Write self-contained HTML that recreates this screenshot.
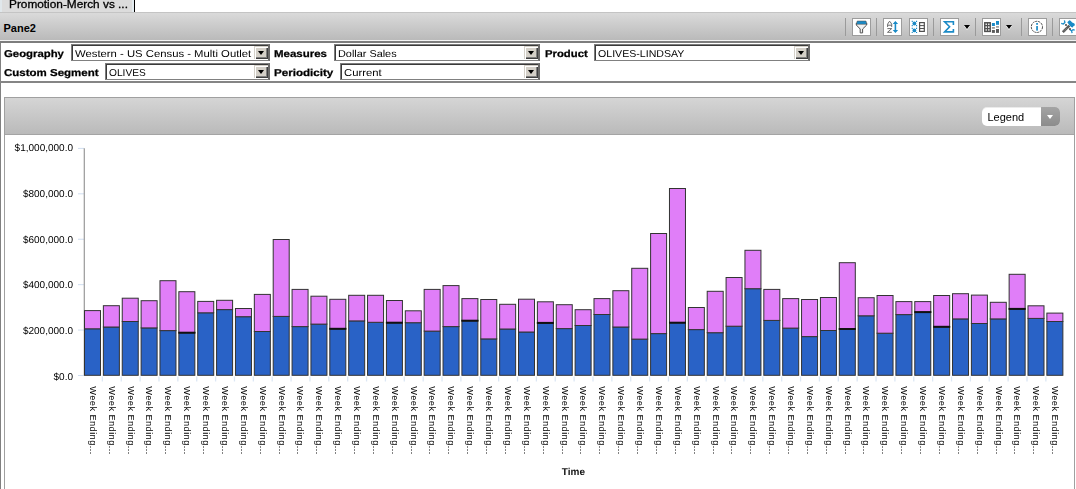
<!DOCTYPE html>
<html><head><meta charset="utf-8"><style>
html,body{margin:0;padding:0;background:#fff;}
body{width:1076px;height:489px;overflow:hidden;position:relative;font-family:"Liberation Sans",sans-serif;}
.a{position:absolute;}
.t{transform-origin:0 0;white-space:pre;line-height:1;}
.tab{left:0;top:0;width:134px;height:12px;background:#dcdcdc;overflow:hidden;}
.tabl{left:0;top:0;width:2px;height:12px;background:#e0e7eb;}
.tabr{left:132px;top:0;width:2px;height:12px;background:#e4ecf0;}
.tabb{left:134px;top:0;width:1px;height:12px;background:#000;}
.tabt{font-size:11px;color:#000;-webkit-text-stroke:0.3px #000;}
.hdrl{left:0;top:12px;width:1076px;height:1px;background:#c4c4c4;}
.hdr{left:0;top:13px;width:1076px;height:27px;background:linear-gradient(#dadada,#bababa);}
.hdrw{left:0;top:40px;width:1076px;height:1px;background:#f4f4f4;}
.hdrd{left:0;top:41px;width:1076px;height:2px;background:#7d7d7d;}
.pane{font-size:11px;font-weight:bold;color:#000;}
.lb{left:0;top:43px;width:1px;height:446px;background:#808080;}
.fb{left:0;top:81px;width:1076px;height:2px;background:#858585;}
.lab{text-rendering:geometricPrecision;-webkit-text-stroke:0.25px #000;font-size:10px;font-weight:bold;color:#000;}
.sel{box-sizing:border-box;height:17px;border-style:solid;border-width:1px 2px 1px 1px;border-color:#7c7c7c #6a6a6a #808080 #7c7c7c;background:#fff;box-shadow:inset 1px 1px #3a3a3a;}
.selt{text-rendering:geometricPrecision;font-size:10px;color:#000;}
.btn{position:absolute;right:0;top:1px;width:14px;height:13px;background:#d4d0c8;box-shadow:inset 1px 1px #d4d0c8,inset 2px 2px #fff,inset -1px -1px #404040,inset -2px -2px #808080;}
.btn:after{content:"";position:absolute;left:4px;top:5px;border-left:3.5px solid transparent;border-right:3.5px solid transparent;border-top:4px solid #000;}
.panel{left:4px;top:97px;width:1071px;height:400px;box-sizing:border-box;border:1px solid #a0a0a0;background:#fff;}
.phdr{left:5px;top:98px;width:1069px;height:36px;background:linear-gradient(#d5d5d5,#bababa);border-bottom:1px solid #a4a4a4;}
.legend{left:982px;top:107px;width:78px;height:19px;border-radius:5px;background:#fff;overflow:hidden;will-change:transform;box-shadow:inset 0 1px rgba(0,0,0,.08);}
.legt{left:5.5px;top:4px;font-size:11px;color:#000;}
.legb{left:58.5px;top:0;width:20px;height:19px;background:linear-gradient(#a4a4a4,#8c8c8c);}
.legb:after{content:"";position:absolute;left:6.3px;top:8px;border-left:3.3px solid transparent;border-right:3.3px solid transparent;border-top:4px solid #fff;}
.chart{position:absolute;left:0;top:0;will-change:transform;}
.sep{position:absolute;top:18px;width:1px;height:18px;background:#9a9a9a;}
.ib{position:absolute;top:18px;width:19px;height:18px;box-sizing:border-box;background:#fff;border:1px solid #9c9c9c;}
.ib svg{position:absolute;left:-1px;top:-1px;}
.dd{position:absolute;top:25px;width:0;height:0;border-left:3.6px solid transparent;border-right:3.6px solid transparent;border-top:4.5px solid #000;filter:drop-shadow(0 1px 0 #fff);}
</style></head><body>
<div class="a tab"></div><div class="a tabl"></div><div class="a tabr"></div><div class="a tabb"></div>
<div class="a t tabt" style="left:8.5px;top:-1px;transform:scaleX(1.075);">Promotion-Merch vs ...</div>
<div class="a hdrl"></div><div class="a hdr"></div><div class="a hdrw"></div><div class="a hdrd"></div>
<div class="a t pane" style="left:3.5px;top:23px;transform:scaleX(1);">Pane2</div>

<div class="sep" style="left:845px"></div>
<div class="ib" style="left:852px"><svg width="19" height="18" viewBox="0 0 19 18"><path d="M4.3 4.8V7l3.9 4v3.9h2.4V11l4.1-4V4.8" fill="#f2f2f2" stroke="#505050" stroke-width="1"/><path d="M5.2 3h8.8l0.8 3.3H4.4z" fill="#1a8ac6" stroke="#5a4a40" stroke-width=".5"/></svg></div>
<div class="sep" style="left:876px"></div>
<div class="ib" style="left:883px"><svg width="19" height="18" viewBox="0 0 19 18"><path d="M4.6 9V6.2L6.2 3.6h0.9L8.7 6.2V9M4.6 7.2h4.1" fill="none" stroke="#5c5c5c" stroke-width=".9"/><path d="M4.4 10.6h4.3L4.5 14.3h4.3" fill="none" stroke="#5c5c5c" stroke-width=".9"/><path d="M12.4 4.5v9" stroke="#1a8ac6" stroke-width="1.6"/><path d="M9.7 6l2.7-3 2.7 3zM9.7 12l2.7 3 2.7-3z" fill="#1a8ac6"/></svg></div>
<div class="ib" style="left:909px"><svg width="19" height="18" viewBox="0 0 19 18"><g fill="#1a8ac6"><circle cx="5.4" cy="5.5" r="1.9"/><circle cx="5.4" cy="12.4" r="1.9"/><path d="M2.7 2.8h1.1v1.1H2.7zM7 2.8h1.1v1.1H7zM2.7 7.1h1.1v1.1H2.7zM7 7.1h1.1v1.1H7zM2.7 9.8h1.1v1.1H2.7zM7 9.8h1.1v1.1H7zM2.7 14h1.1v1.1H2.7zM7 14h1.1v1.1H7z"/></g><rect x="10.6" y="4.6" width="4.7" height="8.8" fill="#fff" stroke="#505050" stroke-width="1.2"/><path d="M10.6 7.6h4.7M10.6 10.5h4.7" stroke="#505050" stroke-width="1"/></svg></div>
<div class="sep" style="left:933px"></div>
<div class="ib" style="left:940px"><svg width="19" height="18" viewBox="0 0 19 18"><path d="M13.4 7V3.7H4.6l5 5.1-5 5.1h8.8V11" fill="none" stroke="#1a8ac6" stroke-width="1.6"/></svg></div>
<div class="dd" style="left:964px"></div>
<div class="sep" style="left:975px"></div>
<div class="ib" style="left:982px"><svg width="19" height="18" viewBox="0 0 19 18"><rect x="2.8" y="4.8" width="5.4" height="8.6" fill="#fff" stroke="#505050" stroke-width="1.5"/><path d="M5.5 4.8v8.6M2.8 7.7h5.4M2.8 10.6h5.4" stroke="#505050" stroke-width="1.3"/><rect x="9.9" y="5" width="3" height="3" fill="#1a8ac6"/><rect x="14" y="3" width="3" height="3.8" fill="#1a8ac6"/><rect x="9.9" y="9" width="3" height="1.8" fill="#9a9a9a"/><rect x="14" y="8.1" width="3" height="1.6" fill="#9a9a9a"/><rect x="9.9" y="12" width="3" height="2.9" fill="#5a5a5a"/><rect x="14" y="11" width="3" height="3.9" fill="#5a5a5a"/></svg></div>
<div class="dd" style="left:1006px"></div>
<div class="sep" style="left:1021px"></div>
<div class="ib" style="left:1028px"><svg width="19" height="18" viewBox="0 0 19 18"><circle cx="8.9" cy="8.9" r="5.6" fill="none" stroke="#505050" stroke-width="1" stroke-dasharray="2.2 0.8"/><rect x="8.2" y="5" width="1.7" height="1.8" fill="#1a8ac6"/><rect x="8.2" y="8" width="1.7" height="4.6" fill="#1a8ac6"/></svg></div>
<div class="sep" style="left:1052px"></div>
<div class="ib" style="left:1059px;width:20px"><svg width="20" height="18" viewBox="0 0 20 18"><path d="M3.8 14.2L10.4 7.6" stroke="#5a5a5a" stroke-width="2.6"/><path d="M4.6 12.2l1.2 1.2M5.8 11l1.2 1.2M7 9.8l1.2 1.2" stroke="#999" stroke-width=".6"/><circle cx="7" cy="7" r="1.1" fill="#555"/><circle cx="11" cy="11.2" r="1.1" fill="#555"/><polygon points="8.3,4.3 10.3,2.2 11.6,2.8 13.2,4.6 15.4,5.6 16,7.3 14.6,8 13.6,9.6 12.2,9 10.4,7.3" fill="#1a8ac6"/><path d="M2.2 5.4L4.3 6 5.9 4.5 5.4 2.3M11.2 12l1.4 0.8 0.5 2.4M12.6 12.8l1.5-1.2 1.6 0.5" fill="none" stroke="#1a8ac6" stroke-width="1.3"/></svg></div>

<div class="a lb"></div>
<div class="a fb"></div>
<div class="a t lab" style="left:4px;top:50px;transform:scaleX(1.134);">Geography</div>
<div class="a sel" style="left:71px;top:44px;width:199px;"><div class="a t selt" style="left:3px;top:5px;transform:scaleX(1.13);">Western - US Census - Multi Outlet</div><span class="btn"></span></div>
<div class="a t lab" style="left:274px;top:50px;transform:scaleX(1.148);">Measures</div>
<div class="a sel" style="left:334px;top:44px;width:206px;"><div class="a t selt" style="left:3px;top:5px;transform:scaleX(1.087);">Dollar Sales</div><span class="btn"></span></div>
<div class="a t lab" style="left:545px;top:50px;transform:scaleX(1.13);">Product</div>
<div class="a sel" style="left:594px;top:44px;width:216px;"><div class="a t selt" style="left:3px;top:5px;transform:scaleX(1.06);">OLIVES-LINDSAY</div><span class="btn"></span></div>
<div class="a t lab" style="left:4px;top:69px;transform:scaleX(1.15);">Custom Segment</div>
<div class="a sel" style="left:105px;top:63px;width:165px;"><div class="a t selt" style="left:3px;top:5px;transform:scaleX(1.02);">OLIVES</div><span class="btn"></span></div>
<div class="a t lab" style="left:274px;top:69px;transform:scaleX(1.16);">Periodicity</div>
<div class="a sel" style="left:340px;top:63px;width:200px;"><div class="a t selt" style="left:3px;top:5px;transform:scaleX(1.126);">Current</div><span class="btn"></span></div>
<div class="a panel"></div>
<div class="a phdr"></div>
<div class="a legend"><div class="a legt">Legend</div><div class="a legb"></div></div>
<svg class="chart" width="1076" height="489" viewBox="0 0 1076 489">
<g><line x1="78" y1="375.50" x2="84" y2="375.50" stroke="#d0def0" stroke-width="1"/><line x1="78" y1="330.08" x2="84" y2="330.08" stroke="#d0def0" stroke-width="1"/><line x1="78" y1="284.66" x2="84" y2="284.66" stroke="#d0def0" stroke-width="1"/><line x1="78" y1="239.24" x2="84" y2="239.24" stroke="#d0def0" stroke-width="1"/><line x1="78" y1="193.82" x2="84" y2="193.82" stroke="#d0def0" stroke-width="1"/><line x1="78" y1="148.40" x2="84" y2="148.40" stroke="#d0def0" stroke-width="1"/><line x1="102.37" y1="376.5" x2="102.37" y2="381.5" stroke="#dce7f4" stroke-width="1.3"/><line x1="121.24" y1="376.5" x2="121.24" y2="381.5" stroke="#dce7f4" stroke-width="1.3"/><line x1="140.11" y1="376.5" x2="140.11" y2="381.5" stroke="#dce7f4" stroke-width="1.3"/><line x1="158.98" y1="376.5" x2="158.98" y2="381.5" stroke="#dce7f4" stroke-width="1.3"/><line x1="177.85" y1="376.5" x2="177.85" y2="381.5" stroke="#dce7f4" stroke-width="1.3"/><line x1="196.72" y1="376.5" x2="196.72" y2="381.5" stroke="#dce7f4" stroke-width="1.3"/><line x1="215.59" y1="376.5" x2="215.59" y2="381.5" stroke="#dce7f4" stroke-width="1.3"/><line x1="234.46" y1="376.5" x2="234.46" y2="381.5" stroke="#dce7f4" stroke-width="1.3"/><line x1="253.33" y1="376.5" x2="253.33" y2="381.5" stroke="#dce7f4" stroke-width="1.3"/><line x1="272.20" y1="376.5" x2="272.20" y2="381.5" stroke="#dce7f4" stroke-width="1.3"/><line x1="291.07" y1="376.5" x2="291.07" y2="381.5" stroke="#dce7f4" stroke-width="1.3"/><line x1="309.94" y1="376.5" x2="309.94" y2="381.5" stroke="#dce7f4" stroke-width="1.3"/><line x1="328.81" y1="376.5" x2="328.81" y2="381.5" stroke="#dce7f4" stroke-width="1.3"/><line x1="347.68" y1="376.5" x2="347.68" y2="381.5" stroke="#dce7f4" stroke-width="1.3"/><line x1="366.55" y1="376.5" x2="366.55" y2="381.5" stroke="#dce7f4" stroke-width="1.3"/><line x1="385.42" y1="376.5" x2="385.42" y2="381.5" stroke="#dce7f4" stroke-width="1.3"/><line x1="404.29" y1="376.5" x2="404.29" y2="381.5" stroke="#dce7f4" stroke-width="1.3"/><line x1="423.16" y1="376.5" x2="423.16" y2="381.5" stroke="#dce7f4" stroke-width="1.3"/><line x1="442.03" y1="376.5" x2="442.03" y2="381.5" stroke="#dce7f4" stroke-width="1.3"/><line x1="460.90" y1="376.5" x2="460.90" y2="381.5" stroke="#dce7f4" stroke-width="1.3"/><line x1="479.77" y1="376.5" x2="479.77" y2="381.5" stroke="#dce7f4" stroke-width="1.3"/><line x1="498.64" y1="376.5" x2="498.64" y2="381.5" stroke="#dce7f4" stroke-width="1.3"/><line x1="517.51" y1="376.5" x2="517.51" y2="381.5" stroke="#dce7f4" stroke-width="1.3"/><line x1="536.38" y1="376.5" x2="536.38" y2="381.5" stroke="#dce7f4" stroke-width="1.3"/><line x1="555.25" y1="376.5" x2="555.25" y2="381.5" stroke="#dce7f4" stroke-width="1.3"/><line x1="574.12" y1="376.5" x2="574.12" y2="381.5" stroke="#dce7f4" stroke-width="1.3"/><line x1="592.99" y1="376.5" x2="592.99" y2="381.5" stroke="#dce7f4" stroke-width="1.3"/><line x1="611.86" y1="376.5" x2="611.86" y2="381.5" stroke="#dce7f4" stroke-width="1.3"/><line x1="630.73" y1="376.5" x2="630.73" y2="381.5" stroke="#dce7f4" stroke-width="1.3"/><line x1="649.60" y1="376.5" x2="649.60" y2="381.5" stroke="#dce7f4" stroke-width="1.3"/><line x1="668.47" y1="376.5" x2="668.47" y2="381.5" stroke="#dce7f4" stroke-width="1.3"/><line x1="687.34" y1="376.5" x2="687.34" y2="381.5" stroke="#dce7f4" stroke-width="1.3"/><line x1="706.21" y1="376.5" x2="706.21" y2="381.5" stroke="#dce7f4" stroke-width="1.3"/><line x1="725.08" y1="376.5" x2="725.08" y2="381.5" stroke="#dce7f4" stroke-width="1.3"/><line x1="743.95" y1="376.5" x2="743.95" y2="381.5" stroke="#dce7f4" stroke-width="1.3"/><line x1="762.82" y1="376.5" x2="762.82" y2="381.5" stroke="#dce7f4" stroke-width="1.3"/><line x1="781.69" y1="376.5" x2="781.69" y2="381.5" stroke="#dce7f4" stroke-width="1.3"/><line x1="800.56" y1="376.5" x2="800.56" y2="381.5" stroke="#dce7f4" stroke-width="1.3"/><line x1="819.43" y1="376.5" x2="819.43" y2="381.5" stroke="#dce7f4" stroke-width="1.3"/><line x1="838.30" y1="376.5" x2="838.30" y2="381.5" stroke="#dce7f4" stroke-width="1.3"/><line x1="857.17" y1="376.5" x2="857.17" y2="381.5" stroke="#dce7f4" stroke-width="1.3"/><line x1="876.04" y1="376.5" x2="876.04" y2="381.5" stroke="#dce7f4" stroke-width="1.3"/><line x1="894.91" y1="376.5" x2="894.91" y2="381.5" stroke="#dce7f4" stroke-width="1.3"/><line x1="913.78" y1="376.5" x2="913.78" y2="381.5" stroke="#dce7f4" stroke-width="1.3"/><line x1="932.65" y1="376.5" x2="932.65" y2="381.5" stroke="#dce7f4" stroke-width="1.3"/><line x1="951.52" y1="376.5" x2="951.52" y2="381.5" stroke="#dce7f4" stroke-width="1.3"/><line x1="970.39" y1="376.5" x2="970.39" y2="381.5" stroke="#dce7f4" stroke-width="1.3"/><line x1="989.26" y1="376.5" x2="989.26" y2="381.5" stroke="#dce7f4" stroke-width="1.3"/><line x1="1008.13" y1="376.5" x2="1008.13" y2="381.5" stroke="#dce7f4" stroke-width="1.3"/><line x1="1027.00" y1="376.5" x2="1027.00" y2="381.5" stroke="#dce7f4" stroke-width="1.3"/><line x1="1045.87" y1="376.5" x2="1045.87" y2="381.5" stroke="#dce7f4" stroke-width="1.3"/></g>
<line x1="84.3" y1="148.3" x2="84.3" y2="375.5" stroke="#999" stroke-width="1.2"/>
<g><rect x="84.50" y="328.80" width="16" height="46.50" fill="#2962c6" stroke="#333"/><rect x="84.50" y="310.60" width="16" height="18.20" fill="#e07ef8" stroke="#333"/><rect x="103.37" y="327.00" width="16" height="48.30" fill="#2962c6" stroke="#333"/><rect x="103.37" y="305.70" width="16" height="21.30" fill="#e07ef8" stroke="#333"/><rect x="122.24" y="321.50" width="16" height="53.80" fill="#2962c6" stroke="#333"/><rect x="122.24" y="298.20" width="16" height="23.30" fill="#e07ef8" stroke="#333"/><rect x="141.11" y="327.90" width="16" height="47.40" fill="#2962c6" stroke="#333"/><rect x="141.11" y="300.70" width="16" height="27.20" fill="#e07ef8" stroke="#333"/><rect x="159.98" y="330.60" width="16" height="44.70" fill="#2962c6" stroke="#333"/><rect x="159.98" y="280.70" width="16" height="49.90" fill="#e07ef8" stroke="#333"/><rect x="178.85" y="332.70" width="16" height="42.60" fill="#2962c6" stroke="#333"/><rect x="178.85" y="291.70" width="16" height="41.00" fill="#e07ef8" stroke="#333"/><line x1="178.35" y1="332.70" x2="195.35" y2="332.70" stroke="#111" stroke-width="2"/><rect x="197.72" y="312.80" width="16" height="62.50" fill="#2962c6" stroke="#333"/><rect x="197.72" y="301.40" width="16" height="11.40" fill="#e07ef8" stroke="#333"/><rect x="216.59" y="309.60" width="16" height="65.70" fill="#2962c6" stroke="#333"/><rect x="216.59" y="300.30" width="16" height="9.30" fill="#e07ef8" stroke="#333"/><rect x="235.46" y="316.70" width="16" height="58.60" fill="#2962c6" stroke="#333"/><rect x="235.46" y="308.50" width="16" height="8.20" fill="#e07ef8" stroke="#333"/><rect x="254.33" y="331.50" width="16" height="43.80" fill="#2962c6" stroke="#333"/><rect x="254.33" y="294.40" width="16" height="37.10" fill="#e07ef8" stroke="#333"/><rect x="273.20" y="316.40" width="16" height="58.90" fill="#2962c6" stroke="#333"/><rect x="273.20" y="239.50" width="16" height="76.90" fill="#e07ef8" stroke="#333"/><rect x="292.07" y="326.60" width="16" height="48.70" fill="#2962c6" stroke="#333"/><rect x="292.07" y="289.40" width="16" height="37.20" fill="#e07ef8" stroke="#333"/><rect x="310.94" y="324.10" width="16" height="51.20" fill="#2962c6" stroke="#333"/><rect x="310.94" y="296.20" width="16" height="27.90" fill="#e07ef8" stroke="#333"/><rect x="329.81" y="328.80" width="16" height="46.50" fill="#2962c6" stroke="#333"/><rect x="329.81" y="299.30" width="16" height="29.50" fill="#e07ef8" stroke="#333"/><line x1="329.31" y1="328.80" x2="346.31" y2="328.80" stroke="#111" stroke-width="2"/><rect x="348.68" y="320.90" width="16" height="54.40" fill="#2962c6" stroke="#333"/><rect x="348.68" y="295.30" width="16" height="25.60" fill="#e07ef8" stroke="#333"/><rect x="367.55" y="322.30" width="16" height="53.00" fill="#2962c6" stroke="#333"/><rect x="367.55" y="295.30" width="16" height="27.00" fill="#e07ef8" stroke="#333"/><rect x="386.42" y="322.70" width="16" height="52.60" fill="#2962c6" stroke="#333"/><rect x="386.42" y="300.50" width="16" height="22.20" fill="#e07ef8" stroke="#333"/><line x1="385.92" y1="322.70" x2="402.92" y2="322.70" stroke="#111" stroke-width="2"/><rect x="405.29" y="322.70" width="16" height="52.60" fill="#2962c6" stroke="#333"/><rect x="405.29" y="310.80" width="16" height="11.90" fill="#e07ef8" stroke="#333"/><rect x="424.16" y="331.10" width="16" height="44.20" fill="#2962c6" stroke="#333"/><rect x="424.16" y="289.40" width="16" height="41.70" fill="#e07ef8" stroke="#333"/><rect x="443.03" y="326.60" width="16" height="48.70" fill="#2962c6" stroke="#333"/><rect x="443.03" y="285.60" width="16" height="41.00" fill="#e07ef8" stroke="#333"/><rect x="461.90" y="320.70" width="16" height="54.60" fill="#2962c6" stroke="#333"/><rect x="461.90" y="298.60" width="16" height="22.10" fill="#e07ef8" stroke="#333"/><line x1="461.40" y1="320.70" x2="478.40" y2="320.70" stroke="#111" stroke-width="2"/><rect x="480.77" y="338.90" width="16" height="36.40" fill="#2962c6" stroke="#333"/><rect x="480.77" y="299.50" width="16" height="39.40" fill="#e07ef8" stroke="#333"/><rect x="499.64" y="329.00" width="16" height="46.30" fill="#2962c6" stroke="#333"/><rect x="499.64" y="304.30" width="16" height="24.70" fill="#e07ef8" stroke="#333"/><rect x="518.51" y="332.00" width="16" height="43.30" fill="#2962c6" stroke="#333"/><rect x="518.51" y="299.20" width="16" height="32.80" fill="#e07ef8" stroke="#333"/><rect x="537.38" y="322.90" width="16" height="52.40" fill="#2962c6" stroke="#333"/><rect x="537.38" y="301.80" width="16" height="21.10" fill="#e07ef8" stroke="#333"/><line x1="536.88" y1="322.90" x2="553.88" y2="322.90" stroke="#111" stroke-width="2"/><rect x="556.25" y="328.60" width="16" height="46.70" fill="#2962c6" stroke="#333"/><rect x="556.25" y="304.70" width="16" height="23.90" fill="#e07ef8" stroke="#333"/><rect x="575.12" y="325.50" width="16" height="49.80" fill="#2962c6" stroke="#333"/><rect x="575.12" y="309.70" width="16" height="15.80" fill="#e07ef8" stroke="#333"/><rect x="593.99" y="314.50" width="16" height="60.80" fill="#2962c6" stroke="#333"/><rect x="593.99" y="298.60" width="16" height="15.90" fill="#e07ef8" stroke="#333"/><rect x="612.86" y="327.00" width="16" height="48.30" fill="#2962c6" stroke="#333"/><rect x="612.86" y="290.70" width="16" height="36.30" fill="#e07ef8" stroke="#333"/><rect x="631.73" y="339.10" width="16" height="36.20" fill="#2962c6" stroke="#333"/><rect x="631.73" y="268.30" width="16" height="70.80" fill="#e07ef8" stroke="#333"/><rect x="650.60" y="333.60" width="16" height="41.70" fill="#2962c6" stroke="#333"/><rect x="650.60" y="233.50" width="16" height="100.10" fill="#e07ef8" stroke="#333"/><rect x="669.47" y="322.70" width="16" height="52.60" fill="#2962c6" stroke="#333"/><rect x="669.47" y="188.50" width="16" height="134.20" fill="#e07ef8" stroke="#333"/><line x1="668.97" y1="322.70" x2="685.97" y2="322.70" stroke="#111" stroke-width="2"/><rect x="688.34" y="329.60" width="16" height="45.70" fill="#2962c6" stroke="#333"/><rect x="688.34" y="307.50" width="16" height="22.10" fill="#e07ef8" stroke="#333"/><rect x="707.21" y="332.70" width="16" height="42.60" fill="#2962c6" stroke="#333"/><rect x="707.21" y="291.30" width="16" height="41.40" fill="#e07ef8" stroke="#333"/><rect x="726.08" y="326.20" width="16" height="49.10" fill="#2962c6" stroke="#333"/><rect x="726.08" y="277.50" width="16" height="48.70" fill="#e07ef8" stroke="#333"/><rect x="744.95" y="288.70" width="16" height="86.60" fill="#2962c6" stroke="#333"/><rect x="744.95" y="250.30" width="16" height="38.40" fill="#e07ef8" stroke="#333"/><rect x="763.82" y="320.40" width="16" height="54.90" fill="#2962c6" stroke="#333"/><rect x="763.82" y="289.40" width="16" height="31.00" fill="#e07ef8" stroke="#333"/><rect x="782.69" y="328.10" width="16" height="47.20" fill="#2962c6" stroke="#333"/><rect x="782.69" y="298.60" width="16" height="29.50" fill="#e07ef8" stroke="#333"/><rect x="801.56" y="336.60" width="16" height="38.70" fill="#2962c6" stroke="#333"/><rect x="801.56" y="299.50" width="16" height="37.10" fill="#e07ef8" stroke="#333"/><rect x="820.43" y="330.50" width="16" height="44.80" fill="#2962c6" stroke="#333"/><rect x="820.43" y="297.50" width="16" height="33.00" fill="#e07ef8" stroke="#333"/><rect x="839.30" y="329.00" width="16" height="46.30" fill="#2962c6" stroke="#333"/><rect x="839.30" y="262.70" width="16" height="66.30" fill="#e07ef8" stroke="#333"/><line x1="838.80" y1="329.00" x2="855.80" y2="329.00" stroke="#111" stroke-width="2"/><rect x="858.17" y="315.80" width="16" height="59.50" fill="#2962c6" stroke="#333"/><rect x="858.17" y="297.70" width="16" height="18.10" fill="#e07ef8" stroke="#333"/><rect x="877.04" y="333.20" width="16" height="42.10" fill="#2962c6" stroke="#333"/><rect x="877.04" y="295.50" width="16" height="37.70" fill="#e07ef8" stroke="#333"/><rect x="895.91" y="314.60" width="16" height="60.70" fill="#2962c6" stroke="#333"/><rect x="895.91" y="301.60" width="16" height="13.00" fill="#e07ef8" stroke="#333"/><rect x="914.78" y="312.10" width="16" height="63.20" fill="#2962c6" stroke="#333"/><rect x="914.78" y="301.60" width="16" height="10.50" fill="#e07ef8" stroke="#333"/><line x1="914.28" y1="312.10" x2="931.28" y2="312.10" stroke="#111" stroke-width="2"/><rect x="933.65" y="326.80" width="16" height="48.50" fill="#2962c6" stroke="#333"/><rect x="933.65" y="295.50" width="16" height="31.30" fill="#e07ef8" stroke="#333"/><line x1="933.15" y1="326.80" x2="950.15" y2="326.80" stroke="#111" stroke-width="2"/><rect x="952.52" y="318.90" width="16" height="56.40" fill="#2962c6" stroke="#333"/><rect x="952.52" y="293.70" width="16" height="25.20" fill="#e07ef8" stroke="#333"/><rect x="971.39" y="323.50" width="16" height="51.80" fill="#2962c6" stroke="#333"/><rect x="971.39" y="295.10" width="16" height="28.40" fill="#e07ef8" stroke="#333"/><rect x="990.26" y="318.90" width="16" height="56.40" fill="#2962c6" stroke="#333"/><rect x="990.26" y="302.30" width="16" height="16.60" fill="#e07ef8" stroke="#333"/><rect x="1009.13" y="308.90" width="16" height="66.40" fill="#2962c6" stroke="#333"/><rect x="1009.13" y="274.30" width="16" height="34.60" fill="#e07ef8" stroke="#333"/><line x1="1008.63" y1="308.90" x2="1025.63" y2="308.90" stroke="#111" stroke-width="2"/><rect x="1028.00" y="318.40" width="16" height="56.90" fill="#2962c6" stroke="#333"/><rect x="1028.00" y="305.80" width="16" height="12.60" fill="#e07ef8" stroke="#333"/><rect x="1046.87" y="321.50" width="16" height="53.80" fill="#2962c6" stroke="#333"/><rect x="1046.87" y="313.10" width="16" height="8.40" fill="#e07ef8" stroke="#333"/></g>
<g font-family="Liberation Sans" font-size="10" letter-spacing="0" fill="#000" text-rendering="geometricPrecision"><text x="73" y="380.00" text-anchor="end">$0.0</text><text x="73" y="334.00" text-anchor="end">$200,000.0</text><text x="73" y="288.00" text-anchor="end">$400,000.0</text><text x="73" y="243.00" text-anchor="end">$600,000.0</text><text x="73" y="197.00" text-anchor="end">$800,000.0</text><text x="73" y="151.00" text-anchor="end">$1,000,000.0</text></g>
<g font-family="Liberation Sans" font-size="9.3" letter-spacing="0.39" fill="#000"><text transform="translate(89.80,386.3) rotate(90)">Week Ending...</text><text transform="translate(108.67,386.3) rotate(90)">Week Ending...</text><text transform="translate(127.54,386.3) rotate(90)">Week Ending...</text><text transform="translate(146.41,386.3) rotate(90)">Week Ending...</text><text transform="translate(165.28,386.3) rotate(90)">Week Ending...</text><text transform="translate(184.15,386.3) rotate(90)">Week Ending...</text><text transform="translate(203.02,386.3) rotate(90)">Week Ending...</text><text transform="translate(221.89,386.3) rotate(90)">Week Ending...</text><text transform="translate(240.76,386.3) rotate(90)">Week Ending...</text><text transform="translate(259.63,386.3) rotate(90)">Week Ending...</text><text transform="translate(278.50,386.3) rotate(90)">Week Ending...</text><text transform="translate(297.37,386.3) rotate(90)">Week Ending...</text><text transform="translate(316.24,386.3) rotate(90)">Week Ending...</text><text transform="translate(335.11,386.3) rotate(90)">Week Ending...</text><text transform="translate(353.98,386.3) rotate(90)">Week Ending...</text><text transform="translate(372.85,386.3) rotate(90)">Week Ending...</text><text transform="translate(391.72,386.3) rotate(90)">Week Ending...</text><text transform="translate(410.59,386.3) rotate(90)">Week Ending...</text><text transform="translate(429.46,386.3) rotate(90)">Week Ending...</text><text transform="translate(448.33,386.3) rotate(90)">Week Ending...</text><text transform="translate(467.20,386.3) rotate(90)">Week Ending...</text><text transform="translate(486.07,386.3) rotate(90)">Week Ending...</text><text transform="translate(504.94,386.3) rotate(90)">Week Ending...</text><text transform="translate(523.81,386.3) rotate(90)">Week Ending...</text><text transform="translate(542.68,386.3) rotate(90)">Week Ending...</text><text transform="translate(561.55,386.3) rotate(90)">Week Ending...</text><text transform="translate(580.42,386.3) rotate(90)">Week Ending...</text><text transform="translate(599.29,386.3) rotate(90)">Week Ending...</text><text transform="translate(618.16,386.3) rotate(90)">Week Ending...</text><text transform="translate(637.03,386.3) rotate(90)">Week Ending...</text><text transform="translate(655.90,386.3) rotate(90)">Week Ending...</text><text transform="translate(674.77,386.3) rotate(90)">Week Ending...</text><text transform="translate(693.64,386.3) rotate(90)">Week Ending...</text><text transform="translate(712.51,386.3) rotate(90)">Week Ending...</text><text transform="translate(731.38,386.3) rotate(90)">Week Ending...</text><text transform="translate(750.25,386.3) rotate(90)">Week Ending...</text><text transform="translate(769.12,386.3) rotate(90)">Week Ending...</text><text transform="translate(787.99,386.3) rotate(90)">Week Ending...</text><text transform="translate(806.86,386.3) rotate(90)">Week Ending...</text><text transform="translate(825.73,386.3) rotate(90)">Week Ending...</text><text transform="translate(844.60,386.3) rotate(90)">Week Ending...</text><text transform="translate(863.47,386.3) rotate(90)">Week Ending...</text><text transform="translate(882.34,386.3) rotate(90)">Week Ending...</text><text transform="translate(901.21,386.3) rotate(90)">Week Ending...</text><text transform="translate(920.08,386.3) rotate(90)">Week Ending...</text><text transform="translate(938.95,386.3) rotate(90)">Week Ending...</text><text transform="translate(957.82,386.3) rotate(90)">Week Ending...</text><text transform="translate(976.69,386.3) rotate(90)">Week Ending...</text><text transform="translate(995.56,386.3) rotate(90)">Week Ending...</text><text transform="translate(1014.43,386.3) rotate(90)">Week Ending...</text><text transform="translate(1033.30,386.3) rotate(90)">Week Ending...</text><text transform="translate(1052.17,386.3) rotate(90)">Week Ending...</text></g>
<text x="573.4" y="474.8" text-anchor="middle" font-family="Liberation Sans" font-size="10" font-weight="bold" fill="#111" text-rendering="geometricPrecision">Time</text>
</svg>
</body></html>
